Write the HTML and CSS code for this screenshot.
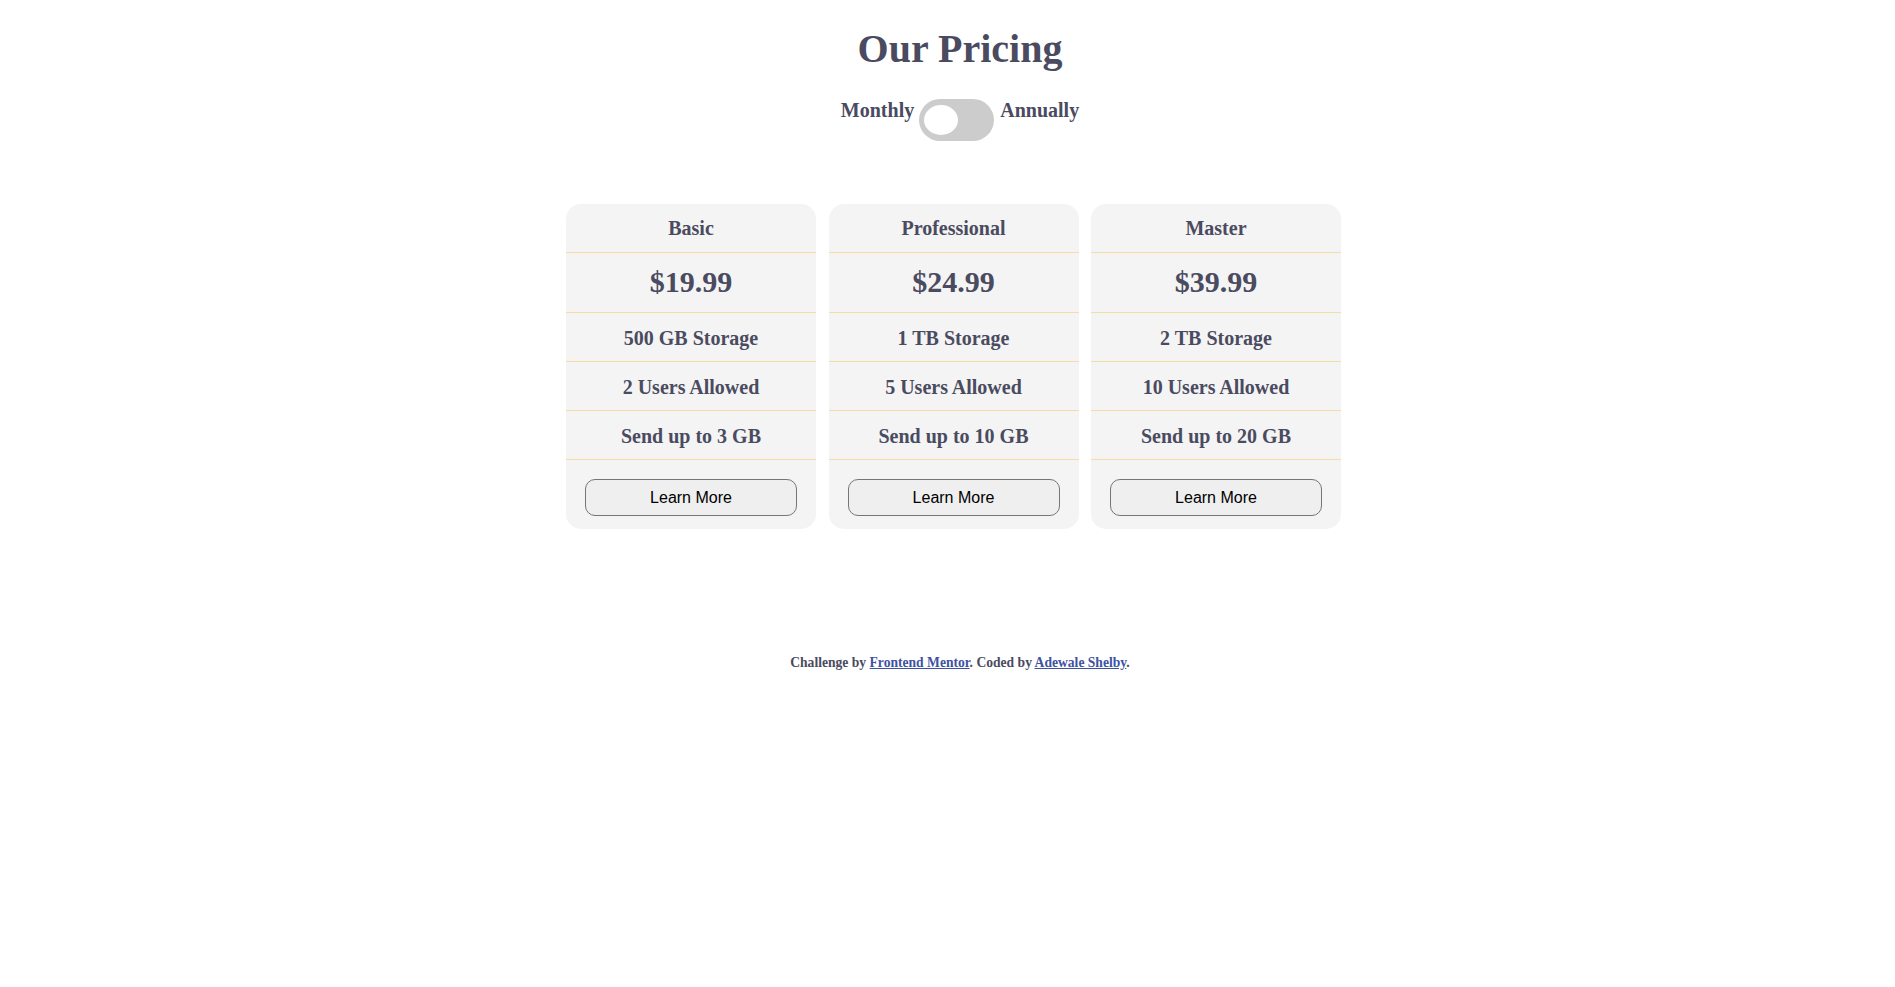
FILE: index.html
```html
<!DOCTYPE html>
<html lang="en">
<head>
<meta charset="utf-8">
<title>Pricing</title>
<link rel="stylesheet" href="styles.css">
</head>
<body>
<div class="page">
  <h1 class="title">Our Pricing</h1>
  <div class="toggle-row">
    <span class="toggle-label">Monthly</span>
    <label class="switch"><span class="knob"></span></label>
    <span class="toggle-label">Annually</span>
  </div>
  <div class="cards">
    <div class="card">
      <div class="row head">Basic</div>
      <div class="row price">$19.99</div>
      <div class="row feature">500 GB Storage</div>
      <div class="row feature">2 Users Allowed</div>
      <div class="row feature">Send up to 3 GB</div>
      <div class="actions"><button class="btn">Learn More</button></div>
    </div>
    <div class="card">
      <div class="row head">Professional</div>
      <div class="row price">$24.99</div>
      <div class="row feature">1 TB Storage</div>
      <div class="row feature">5 Users Allowed</div>
      <div class="row feature">Send up to 10 GB</div>
      <div class="actions"><button class="btn">Learn More</button></div>
    </div>
    <div class="card">
      <div class="row head">Master</div>
      <div class="row price">$39.99</div>
      <div class="row feature">2 TB Storage</div>
      <div class="row feature">10 Users Allowed</div>
      <div class="row feature">Send up to 20 GB</div>
      <div class="actions"><button class="btn">Learn More</button></div>
    </div>
  </div>
  <div class="attribution">
    Challenge by <a href="#">Frontend Mentor</a>. Coded by <a href="#">Adewale Shelby</a>.
  </div>
</div>
</body>
</html>
```

FILE: styles.css
```css
html, body {
  margin: 0;
  padding: 0;
  background: #ffffff;
}

body {
  font-family: "Liberation Serif", "Times New Roman", serif;
  font-weight: bold;
  color: #4a4b60;
}

.page {
  padding: 27px 0 0 25px;
}

.title {
  margin: 0;
  font-size: 40px;
  line-height: 44px;
  text-align: center;
  font-weight: bold;
}

.toggle-row {
  margin-top: 28px;
  display: flex;
  justify-content: center;
  align-items: flex-start;
  gap: 5px;
}

.toggle-label {
  font-size: 20px;
  line-height: 23px;
  margin-top: 0;
}

.switch {
  position: relative;
  display: block;
  width: 75px;
  height: 42px;
  border-radius: 21px;
  background: #cccccc;
  margin-right: 1px;
}

.knob {
  position: absolute;
  left: 5px;
  top: 6px;
  width: 34px;
  height: 30px;
  border-radius: 50%;
  background: #ffffff;
}

.cards {
  margin-top: 63px;
  padding-right: 13px;
  display: flex;
  justify-content: center;
  gap: 12.5px;
}

.card {
  width: 250px;
  background: #f4f4f4;
  border-radius: 15px;
  overflow: hidden;
  text-align: center;
}

.row {
  border-bottom: 1px solid #f6dba6;
}

.head {
  font-size: 20px;
  line-height: 24px;
  padding: 12px 0;
}

.price {
  font-size: 30px;
  line-height: 35px;
  padding: 11px 0 13px;
}

.feature {
  font-size: 20px;
  line-height: 24px;
  padding: 13px 0 11px;
}

.actions {
  padding: 19px 19px 13px;
}

.btn {
  display: block;
  width: 100%;
  height: 37px;
  margin: 0;
  padding: 0;
  border: 1px solid #767676;
  border-radius: 10px;
  background: #efefef;
  color: #000000;
  font-family: "Liberation Sans", Arial, sans-serif;
  font-size: 16px;
  font-weight: normal;
}

.attribution {
  margin-top: 126px;
  font-size: 13.6px;
  line-height: 15px;
  text-align: center;
}

.attribution a {
  color: #3e52a3;
  text-decoration: underline;
}
```
